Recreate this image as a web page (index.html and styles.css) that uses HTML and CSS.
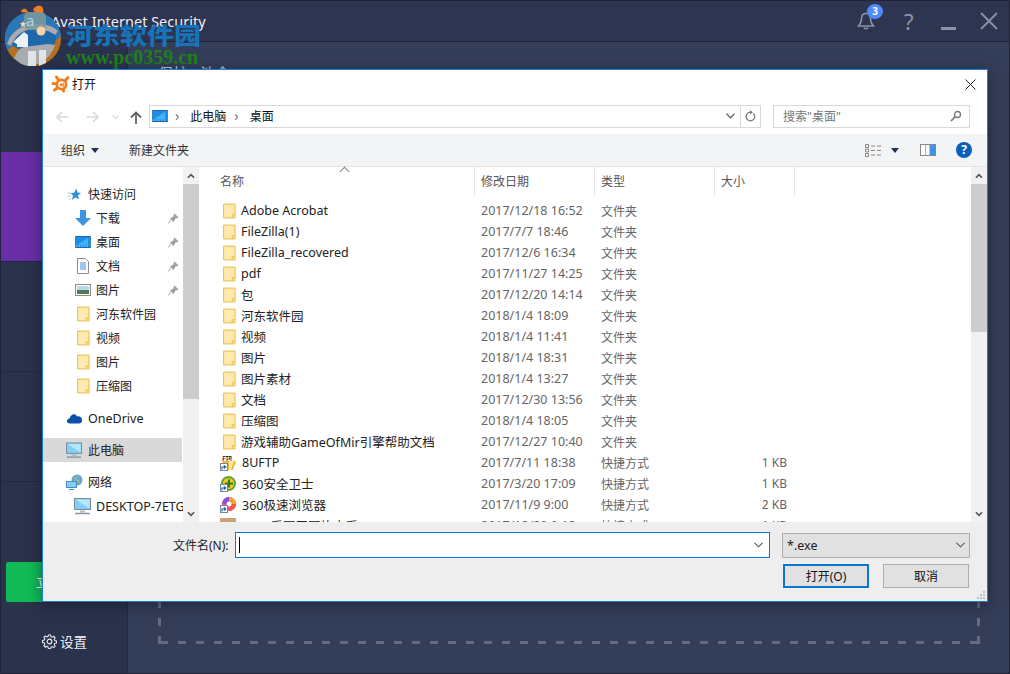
FILE: index.html
```html
<!DOCTYPE html>
<html lang="zh">
<head>
<meta charset="utf-8">
<title>Avast Internet Security</title>
<link rel="stylesheet" href="styles.css">
</head>
<body>
<svg class="defs" width="0" height="0" aria-hidden="true">
  <symbol id="folder" viewBox="0 0 14 16">
    <path d="M.5.5h12.500v15H.5z" fill="#fde08c" stroke="#e8bf4e"/>
    <path d="M1.500 1.500h10.500v11h-2.500v2h-8z" fill="#fee9ae"/>
    <path d="M10 15v-3h3" fill="none" stroke="#e8bf4e"/>
  </symbol>
  <symbol id="splash" viewBox="0 0 20 18">
    <g stroke="#f57c1f" stroke-width="3" stroke-linecap="round">
      <path d="M10.500 9.500 5.500 2M10.500 9.500 17 2.500M10.500 9.500 2 8.500M10.500 9.500 3.500 15M10.500 9.500 12.500 16"/>
    </g>
    <circle cx="10.500" cy="9.500" r="6" fill="#f57c1f"/>
    <circle cx="10.500" cy="9.500" r="3.300" fill="#fff"/>
    <circle cx="10.300" cy="9.700" r="1.500" fill="#f57c1f"/>
    <path d="M12.300 7.500v4.300" stroke="#f57c1f" stroke-width="1.100"/>
  </symbol>
  <symbol id="monitor" viewBox="0 0 18 17">
    <rect x=".5" y=".5" width="16" height="11" fill="#7fd0f7" stroke="#7a8a99"/>
    <path d="M1.500 1.500h14v9z" fill="#b6e6fb"/>
    <path d="M6 12.500h5v2H6z" fill="#b6bcc4"/>
    <path d="M1 15.500h15" stroke="#8a97a6" stroke-width="1.500"/>
  </symbol>
  <symbol id="desk" viewBox="0 0 17 13">
    <rect x=".5" y=".5" width="16" height="12" fill="#1e8fe6" stroke="#0c62b4"/>
    <path d="M2 10 14 2v8z" fill="#44b1f3"/>
    <path d="M1 11h15" stroke="#dff" stroke-dasharray="1 2"/>
  </symbol>
  <symbol id="pin" viewBox="0 0 11 11">
    <path d="M6.500.5 10.500 4.500 9 5.500 8 5 6 8 6 9.500 1.500 5 3 5 6 3 5.500 2z" fill="#9aa0a6"/>
    <path d="M3 7 .5 10.500" stroke="#9aa0a6"/>
  </symbol>
  <symbol id="shortcut" viewBox="0 0 8 8">
    <rect x=".5" y=".5" width="7" height="7" fill="#fff" stroke="#7b8794"/>
    <path d="M2 6.500V4h3M3.800 2.300 5.800 4 3.800 5.700" fill="none" stroke="#1d5fb0" stroke-width="1.100"/>
  </symbol>
</svg>

<div class="app">
  <header class="titlebar">
    <span class="app-name">Avast Internet Security</span>
    <div class="title-actions">
      <span class="bell">
        <svg viewBox="0 0 18 20" width="18" height="20"><path d="M9 2.500c-3 0-4.500 2.300-4.500 5 0 4-1 5.500-3 7.500h15c-2-2-3-3.500-3-7.500 0-2.700-1.500-5-4.500-5zM7 16.500c.4 1.500 3.600 1.500 4 0" fill="none" stroke="#8b93a6" stroke-width="1.500"/></svg>
        <span class="badge">3</span>
      </span>
      <span class="help">?</span>
      <span class="min"></span>
      <svg class="close-x" viewBox="0 0 18 18" width="18" height="18"><path d="M1 1l16 16M17 1 1 17" stroke="#8b93a6" stroke-width="1.800"/></svg>
    </div>
  </header>
  <div class="app-body">
    <aside class="sidebar">
      <div class="side-top"></div>
      <div class="side-item side-active"></div>
      <div class="side-item"></div>
      <div class="side-item"></div>
      <div class="side-upgrade"><span class="upgrade-btn">立</span></div>
      <div class="side-settings">
        <svg viewBox="0 0 16 16" width="15" height="15"><path d="M6.800 1h2.400l.4 2 1.400.6 1.700-1.100 1.700 1.700-1.100 1.700.6 1.400 2 .4v2.400l-2 .4-.6 1.400 1.100 1.700-1.700 1.700-1.700-1.100-1.400.6-.4 2H6.800l-.4-2L5 13.800l-1.700 1.100-1.700-1.700 1.100-1.700L2.100 10l-2-.4V7.200l2-.4.600-1.400L1.600 3.700l1.700-1.700L5 3.100l1.400-.6z" transform="translate(.5 .1) scale(.94)" fill="none" stroke="#e8ebf2" stroke-width="1.200"/><circle cx="8" cy="8" r="2.500" fill="none" stroke="#e8ebf2" stroke-width="1.200"/></svg>
        <span>设置</span>
      </div>
    </aside>
    <main class="main">
      <div class="tabs"><span>保护</span><span>池金</span></div>
      <div class="dropzone"></div>
    </main>
  </div>
</div>

<div class="watermark">
  <svg class="wm-logo" viewBox="0 0 64 68" width="64" height="68">
    <path d="M21 12c0-3 3-4 5-3l3 4zM33 10c1-4 6-5 8-4 2 1 3 4 2 7l-5 2z" fill="#f57c1f"/>
    <ellipse cx="33" cy="39" rx="28" ry="27" fill="#b7701f"/>
    <path d="M5 41C4 24 17 12 33 12c15 0 27 10 28 24l-7 6C40 36 20 38 8 50c-2-3-3-6-3-9z" fill="#2b78b6"/>
    <ellipse cx="33" cy="39" rx="23" ry="13" fill="#1d69aa"/>
    <path d="M7 44C11 30 24 23 40 24c8 .5 14 3 18 7l-3 4c-5-4-12-6-20-6-11 0-20 6-24 17z" fill="#a9abae"/>
    <path d="M14 58c3-5 4-9 10-11l24-3 7 1c-3 9-9 16-17 19l-10 2c-6-1-10-4-14-8z" fill="#a9abae"/>
    <path d="M13 42 24 32l4 3v12H17v-3z" fill="#eef1f4"/>
    <path d="M28 51h8v15h-8zM39 50h7v13l-7 3z" fill="#e3e4e6"/>
    <rect x="24" y="12" width="22" height="18" rx="5" fill="#7d9a9b" opacity=".85"/>
    <circle cx="41" cy="31" r="4.500" fill="#fbd3a6"/>
    <path d="M23 21l1 2 2 .3-1.500 1.500.4 2.200-1.900-1-1.900 1 .4-2.200L20 23.300l2-.3z" fill="#fbd3a6"/>
    <text x="26" y="26" class="wm-a">a</text>
  </svg>
  <div class="wm-text">
    <div class="wm-cn">河东软件园</div>
    <div class="wm-url">www.pc0359.cn</div>
  </div>
</div>

<section class="dialog">
  <div class="d-title">
    <svg viewBox="0 0 20 18" width="20" height="18"><use href="#splash"/></svg>
    <span>打开</span>
    <svg class="d-close" viewBox="0 0 11 11" width="11" height="11"><path d="M.5.5l10 10M10.500.5l-10 10" stroke="#222" stroke-width="1"/></svg>
  </div>
  <div class="d-addr">
    <div class="nav-arrows">
      <svg viewBox="0 0 13 12" width="13" height="12"><path d="M12.500 6H1.500M6 1 1 6l5 5" fill="none" stroke="#d9d9d9" stroke-width="1.600"/></svg>
      <svg viewBox="0 0 13 12" width="13" height="12"><path d="M.5 6h11M7 1l5 5-5 5" fill="none" stroke="#d9d9d9" stroke-width="1.600"/></svg>
      <svg viewBox="0 0 7 5" width="7" height="5"><path d="M.5.5 3.500 3.500 6.500.5" fill="none" stroke="#d9d9d9" stroke-width="1.200"/></svg>
      <svg viewBox="0 0 12 13" width="12" height="13"><path d="M6 13V2M1 6.500 6 1.500l5 5" fill="none" stroke="#666" stroke-width="1.800"/></svg>
    </div>
    <div class="addr-box">
      <svg class="addr-icon" viewBox="0 0 17 13" width="16" height="12"><use href="#desk"/></svg>
      <span class="crumb-sep">›</span><span>此电脑</span>
      <span class="crumb-sep">›</span><span>桌面</span>
      <svg class="addr-drop" viewBox="0 0 9 6" width="9" height="6"><path d="M.5.800 4.500 4.800 8.500.8" fill="none" stroke="#666" stroke-width="1.300"/></svg>
      <span class="addr-refresh"><svg viewBox="0 0 11 12" width="11" height="12"><path d="M8.500 3.500A4.300 4.300 0 1 1 5.500 2.200" fill="none" stroke="#777" stroke-width="1.200"/><path d="M5 .2v4l3-2z" fill="#777"/></svg></span>
    </div>
    <div class="search-box">
      <span>搜索"桌面"</span>
      <svg viewBox="0 0 12 12" width="12" height="12"><circle cx="7.500" cy="4.500" r="3" fill="none" stroke="#777" stroke-width="1.300"/><path d="M5.300 6.700 1 11" stroke="#777" stroke-width="1.700"/></svg>
    </div>
  </div>
  <div class="d-tools">
    <span class="tool">组织<i class="caret"></i></span>
    <span class="tool tool-new">新建文件夹</span>
    <div class="tools-right">
      <svg viewBox="0 0 17 13" width="17" height="13"><path d="M.5.500h3v3h-3zM.5 5h3v3h-3zM.5 9.500h3v3h-3z" fill="none" stroke="#888"/><path d="M6 2h4M12 2h4M6 6.500h4M12 6.500h4M6 11h4M12 11h4" stroke="#888"/></svg>
      <i class="caret caret-view"></i>
      <svg class="pane-icon" viewBox="0 0 16 12" width="16" height="12"><rect x=".5" y=".5" width="15" height="11" fill="#fff" stroke="#888"/><rect x="9.500" y="1" width="5.500" height="10" fill="#3f95df"/><path d="M5.500 1v10" stroke="#aaa"/></svg>
      <span class="help-round">?</span>
    </div>
  </div>
  <div class="d-content">
    <nav class="tree">
      <div class="tree-list">
        <div class="tree-row lv0 first">
          <svg viewBox="0 0 14 13" width="14" height="13"><path d="M9 .5 10 4.500l3.500.5-3 2.500 1 4-3.500-2.300L4.500 12l1-4.500L3 5l3.500-.3z" fill="#2f8fdc"/><path d="M0 5h3M0 8h3M1 11h2" stroke="#9ccbee"/></svg>
          <span>快速访问</span>
        </div>
        <div class="tree-row lv1">
          <svg viewBox="0 0 16 16" width="16" height="16"><path d="M5 0h6v8h5l-8 8-8-8h5z" fill="#3f94e0"/></svg>
          <span>下载</span><svg class="pin" width="11" height="11"><use href="#pin"/></svg>
        </div>
        <div class="tree-row lv1">
          <svg viewBox="0 0 17 13" width="16" height="12"><use href="#desk"/></svg>
          <span>桌面</span><svg class="pin" width="11" height="11"><use href="#pin"/></svg>
        </div>
        <div class="tree-row lv1">
          <svg viewBox="0 0 16 16" width="16" height="16"><path d="M2.500.5h8l3 3v12h-11z" fill="#fff" stroke="#8c8c8c"/><path d="M5 5h6M5 7h6M5 9h6M5 11h6" stroke="#3d8ed6"/></svg>
          <span>文档</span><svg class="pin" width="11" height="11"><use href="#pin"/></svg>
        </div>
        <div class="tree-row lv1">
          <svg viewBox="0 0 16 12" width="16" height="12"><rect x=".5" y=".5" width="15" height="11" fill="#fff" stroke="#8c8c8c"/><rect x="2" y="2" width="12" height="4" fill="#b9d8ee"/><rect x="2" y="6" width="12" height="4" fill="#4f7d55"/></svg>
          <span>图片</span><svg class="pin" width="11" height="11"><use href="#pin"/></svg>
        </div>
        <div class="tree-row lv1 ind"><svg width="13" height="16"><use href="#folder"/></svg><span>河东软件园</span></div>
        <div class="tree-row lv1 ind"><svg width="13" height="16"><use href="#folder"/></svg><span>视频</span></div>
        <div class="tree-row lv1 ind"><svg width="13" height="16"><use href="#folder"/></svg><span>图片</span></div>
        <div class="tree-row lv1 ind"><svg width="13" height="16"><use href="#folder"/></svg><span>压缩图</span></div>
        <div class="tree-row lv0 gap-a latin">
          <svg viewBox="0 0 16 11" width="16" height="11"><path d="M3.500 10.500c-4 0-4-4.500-.5-5C4 1 9-.5 10.500 3.500c3-.8 5.500 1.500 5 4.500-.2 1.500-1.500 2.500-3 2.500z" fill="#0f4fa8"/></svg>
          <span>OneDrive</span>
        </div>
        <div class="tree-row lv0 gap-b selected">
          <svg width="18" height="17"><use href="#monitor"/></svg>
          <span>此电脑</span>
        </div>
        <div class="tree-row lv0 gap-b">
          <svg viewBox="0 0 17 16" width="17" height="16"><circle cx="11" cy="6" r="5.500" fill="#6fa5d6"/><path d="M8 2c2 2 4 3 6 6-2 1-4 0-5-2z" fill="#8fc27c"/><rect x=".5" y="7.500" width="10" height="6" fill="#7fd0f7" stroke="#4c87bb"/><path d="M3 15.500h5" stroke="#4c87bb"/></svg>
          <span>网络</span>
        </div>
        <div class="tree-row lv1 latin">
          <svg width="18" height="17"><use href="#monitor"/></svg>
          <span>DESKTOP-7ETG</span>
        </div>
      </div>
      <div class="scroll scroll-nav">
        <span class="sc-btn"><svg viewBox="0 0 9 6" width="8" height="6"><path d="M1 5 4.500 1.500 8 5" fill="none" stroke="#555" stroke-width="1.800"/></svg></span>
        <span class="sc-thumb"></span>
        <span class="sc-btn sc-end"><svg viewBox="0 0 9 6" width="8" height="6"><path d="M1 1 4.500 4.500 8 1" fill="none" stroke="#555" stroke-width="1.800"/></svg></span>
      </div>
    </nav>
    <div class="files">
      <div class="file-head">
        <span class="col-name">名称<i class="sort"></i></span>
        <span>修改日期</span>
        <span>类型</span>
        <span>大小</span>
      </div>
      <div class="file-body">
        <div class="file-row"><span class="fn"><svg width="13" height="16"><use href="#folder"/></svg>Adobe Acrobat</span><span class="dt">2017/12/18 16:52</span><span>文件夹</span><span></span></div>
        <div class="file-row"><span class="fn"><svg width="13" height="16"><use href="#folder"/></svg>FileZilla(1)</span><span class="dt">2017/7/7 18:46</span><span>文件夹</span><span></span></div>
        <div class="file-row"><span class="fn"><svg width="13" height="16"><use href="#folder"/></svg>FileZilla_recovered</span><span class="dt">2017/12/6 16:34</span><span>文件夹</span><span></span></div>
        <div class="file-row"><span class="fn"><svg width="13" height="16"><use href="#folder"/></svg>pdf</span><span class="dt">2017/11/27 14:25</span><span>文件夹</span><span></span></div>
        <div class="file-row"><span class="fn"><svg width="13" height="16"><use href="#folder"/></svg>包</span><span class="dt">2017/12/20 14:14</span><span>文件夹</span><span></span></div>
        <div class="file-row"><span class="fn"><svg width="13" height="16"><use href="#folder"/></svg>河东软件园</span><span class="dt">2018/1/4 18:09</span><span>文件夹</span><span></span></div>
        <div class="file-row"><span class="fn"><svg width="13" height="16"><use href="#folder"/></svg>视频</span><span class="dt">2018/1/4 11:41</span><span>文件夹</span><span></span></div>
        <div class="file-row"><span class="fn"><svg width="13" height="16"><use href="#folder"/></svg>图片</span><span class="dt">2018/1/4 18:31</span><span>文件夹</span><span></span></div>
        <div class="file-row"><span class="fn"><svg width="13" height="16"><use href="#folder"/></svg>图片素材</span><span class="dt">2018/1/4 13:27</span><span>文件夹</span><span></span></div>
        <div class="file-row"><span class="fn"><svg width="13" height="16"><use href="#folder"/></svg>文档</span><span class="dt">2017/12/30 13:56</span><span>文件夹</span><span></span></div>
        <div class="file-row"><span class="fn"><svg width="13" height="16"><use href="#folder"/></svg>压缩图</span><span class="dt">2018/1/4 18:05</span><span>文件夹</span><span></span></div>
        <div class="file-row"><span class="fn"><svg width="13" height="16"><use href="#folder"/></svg>游戏辅助GameOfMir引擎帮助文档</span><span class="dt">2017/12/27 10:40</span><span>文件夹</span><span></span></div>
        <div class="file-row"><span class="fn"><svg class="app-ic" viewBox="0 0 16 16" width="16" height="16"><path d="M2 6h14l-3 9H5z" fill="#f2b632"/><path d="M9 6h5l-3 9H9z" fill="#fbe9a8"/><path d="M2 4.500h2v1H2zM6 4.500h2v1H6zM10 4.500h2v1h-2z" fill="#c33"/><text x="2.500" y="4.500" class="ftp">FTP</text><use href="#shortcut" width="8" height="8" y="8"/></svg>8UFTP</span><span class="dt">2017/7/11 18:38</span><span>快捷方式</span><span class="sz">1 KB</span></div>
        <div class="file-row"><span class="fn"><svg class="app-ic" viewBox="0 0 16 16" width="16" height="16"><circle cx="8.500" cy="7.500" r="7.500" fill="#5ca82b"/><circle cx="8.500" cy="7.500" r="5.500" fill="#f0c92b"/><path d="M9 3.500v8M5 7.500h8" stroke="#2b7a1f" stroke-width="2"/><use href="#shortcut" width="8" height="8" y="8"/></svg>360安全卫士</span><span class="dt">2017/3/20 17:09</span><span>快捷方式</span><span class="sz">1 KB</span></div>
        <div class="file-row"><span class="fn"><svg class="app-ic" viewBox="0 0 16 16" width="16" height="16"><circle cx="9" cy="7" r="7" fill="#e74d9b"/><path d="M9 0a7 7 0 0 1 7 7H9z" fill="#f4a32a"/><path d="M2 7a7 7 0 0 1 7-7v7z" fill="#8c4fd8"/><path d="M9 7h7a7 7 0 0 1-7 7z" fill="#f25c3c"/><circle cx="9" cy="7" r="2.500" fill="#fff"/><use href="#shortcut" width="8" height="8" y="8"/></svg>360极速浏览器</span><span class="dt">2017/11/9 9:00</span><span>快捷方式</span><span class="sz">2 KB</span></div>
        <div class="file-row"><span class="fn"><svg class="app-ic" viewBox="0 0 16 16" width="16" height="16"><rect width="16" height="16" fill="#c9a27a"/></svg>2345看图王图片查看</span><span class="dt">2017/12/20 9:12</span><span>快捷方式</span><span class="sz">1 KB</span></div>
      </div>
    </div>
    <div class="scroll scroll-main">
      <span class="sc-btn"><svg viewBox="0 0 9 6" width="8" height="6"><path d="M1 5 4.500 1.500 8 5" fill="none" stroke="#555" stroke-width="1.800"/></svg></span>
      <span class="sc-thumb"></span>
      <span class="sc-btn sc-end"><svg viewBox="0 0 9 6" width="8" height="6"><path d="M1 1 4.500 4.500 8 1" fill="none" stroke="#555" stroke-width="1.800"/></svg></span>
    </div>
  </div>
  <div class="d-bottom">
    <div class="name-row">
      <label>文件名(N):</label>
      <div class="name-input"><i class="cursor"></i><svg viewBox="0 0 9 6" width="9" height="6"><path d="M.5.800 4.500 4.800 8.500.8" fill="none" stroke="#555" stroke-width="1.100"/></svg></div>
      <div class="type-select"><span>*.exe</span><svg viewBox="0 0 9 6" width="9" height="6"><path d="M.5.800 4.500 4.800 8.500.8" fill="none" stroke="#555" stroke-width="1.100"/></svg></div>
    </div>
    <div class="btn-row">
      <button class="btn btn-primary">打开(O)</button>
      <button class="btn">取消</button>
    </div>
    <svg class="grip" viewBox="0 0 9 9" width="9" height="9"><path d="M7 1h2v2H7zM4 4h2v2H4zM7 4h2v2H7zM1 7h2v2H1zM4 7h2v2H4zM7 7h2v2H7z" fill="#c0c0c0"/></svg>
  </div>
</section>
</body>
</html>
```

FILE: styles.css
```css
* { box-sizing: border-box; }
html, body { margin: 0; height: 100%; overflow: hidden; }
body {
  position: relative;
  width: 1010px;
  height: 674px;
  background: #353e59;
  font-family: "Noto Sans", "Noto Sans CJK SC", sans-serif;
  font-size: 12px;
  color: #222;
}
.defs { position: absolute; }

/* Avast window behind */
.app { width: 1010px; height: 674px; display: flex; flex-direction: column; border: 1px solid #1f2438; }
.titlebar {
  height: 41px; flex: none; display: flex; align-items: center; background: #2d3550;
  border-bottom: 1px solid #1f2438; padding-left: 50px; color: #eef0f5;
}
.app-name { font-size: 14.500px; font-family: "Noto Sans", sans-serif; }
.title-actions { margin-left: auto; display: flex; align-items: center; padding-right: 11px; }
.bell { position: relative; display: block; height: 20px; width: 18px; margin-right: 29px; }
.badge {
  position: absolute; left: 10px; top: -7px; width: 16px; height: 15px; border-radius: 50%;
  background: #4d8bff; color: #fff; font-size: 10px; font-weight: 700; line-height: 15px; text-align: center;
}
.help { color: #8b93a6; font-size: 22px; line-height: 24px; margin-right: 26px; width: 11px; }
.min { width: 15px; height: 3px; background: #8b93a6; margin-right: 24px; margin-top: 15px; }

.app-body { flex: 1; display: flex; min-height: 0; }
.sidebar { width: 127px; flex: none; background: #2b324b; border-right: 1px solid #222940; display: flex; flex-direction: column; }
.side-top { height: 110px; flex: none; }
.side-item { height: 110px; flex: none; border-bottom: 1px solid #222940; }
.side-active { background: #6a2ea8; }
.side-upgrade { flex: none; padding: 80px 5px 0 5px; height: 120px; }
.upgrade-btn {
  display: block; height: 40px; border-radius: 2px; background: #10bb55; color: #fff;
  font-size: 14px; line-height: 40px; padding-left: 30px;
}
.side-settings { display: flex; align-items: center; gap: 3px; padding: 0 0 0 41px; margin-top: 29px; color: #eef0f5; font-size: 13.500px; }
.side-settings svg { flex: none; }

.main { flex: 1; display: flex; flex-direction: column; padding: 20px 29px 29px 30px; background: #353e59; }
.tabs { display: flex; gap: 12px; color: #c7cbd6; font-size: 15px; height: 300px; flex: none; }
.dropzone {
  flex: 1;
  background:
    repeating-linear-gradient(90deg, #646c84 0 8px, transparent 8px 18px) 2px bottom / 100% 3px no-repeat,
    repeating-linear-gradient(0deg, #646c84 0 8px, transparent 8px 18px) left bottom / 3px 100% no-repeat,
    repeating-linear-gradient(0deg, #646c84 0 8px, transparent 8px 18px) right bottom / 3px 100% no-repeat;
}

/* Watermark */
.watermark { position: absolute; left: 0; top: 0; display: flex; pointer-events: none; }
.wm-logo { flex: none; }
.wm-a { font-family: "Noto Sans", sans-serif; font-size: 15px; fill: #a8d6f5; }
.wm-text { margin-left: 2px; padding-top: 17px; font-weight: 700; }
.wm-cn { color: #1772b8; font-size: 27px; line-height: 30px; font-weight: 900; font-family: "Noto Sans CJK SC", serif; transform: scaleY(.85); transform-origin: center bottom; }
.wm-url { color: #20801f; font-family: "Liberation Serif", serif; font-size: 20px; line-height: 20px; }

/* Dialog */
.dialog {
  position: absolute; left: 42px; top: 69px; width: 946px; height: 533px;
  background: #fff; border: 1px solid #1b82d2; display: flex; flex-direction: column;
  box-shadow: 0 3px 14px rgba(10,14,30,.5);
}
.d-title { height: 28px; flex: none; display: flex; align-items: center; padding: 0 10px 0 8px; gap: 1px; color: #111; }
.d-close { margin-left: auto; margin-right: 1px; }
.d-addr { height: 36px; flex: none; display: flex; align-items: center; padding: 0 17px 0 13px; }
.nav-arrows { display: flex; align-items: center; width: 93px; flex: none; margin-top: 2px; }
.nav-arrows svg:nth-child(1) { margin-right: 17px; }
.nav-arrows svg:nth-child(2) { margin-right: 13px; }
.nav-arrows svg:nth-child(3) { margin-right: 11px; }
.addr-box {
  width: 612px; height: 23px; border: 1px solid #d9d9d9; display: flex; align-items: center;
  padding-left: 2px; color: #111; flex: none;
}
.addr-icon { margin-right: -1px; }
.crumb-sep { color: #777; font-size: 14px; line-height: 14px; margin: 0 11px 0 8px; }
.addr-drop { margin-left: auto; margin-right: 5px; }
.addr-refresh { width: 20px; height: 21px; border-left: 1px solid #d9d9d9; display: flex; align-items: center; justify-content: center; }
.search-box {
  margin-left: 12px; width: 202px; height: 23px; border: 1px solid #d9d9d9; display: flex;
  align-items: center; justify-content: space-between; padding: 0 7px 0 9px; color: #777;
}
.d-tools { height: 33px; flex: none; background: #f3f4f6; border-bottom: 1px solid #e3e3e3; display: flex; align-items: center; padding: 0 15px 0 18px; color: #333; }
.tool { display: flex; align-items: center; gap: 6px; }
.tool-new { margin-left: 30px; }
.caret { display: block; width: 0; height: 0; border: 4px solid transparent; border-top: 5px solid #1f3358; border-bottom: 0; }
.tools-right { margin-left: auto; display: flex; align-items: center; }
.caret-view { margin-left: 9px; }
.pane-icon { margin-left: 21px; }
.help-round { margin-left: 20px; width: 16px; height: 16px; border-radius: 50%; background: #0a5fb8; color: #fff; font-weight: 700; line-height: 16px; text-align: center; }

.d-content { height: 355px; flex: none; display: flex; min-height: 0; }
.tree { width: 156px; flex: none; display: flex; border-right: 1px solid #f0f0f0; }
.tree-list { width: 140px; flex: none; overflow: hidden; padding-top: 15px; }
.tree-row { height: 24px; display: flex; align-items: center; white-space: nowrap; color: #222; position: relative; }
.tree-row.lv0 { padding-left: 23px; gap: 5px; }
.tree-row.lv1 { padding-left: 31px; gap: 4px; }
.tree-row.latin { font-size: 12.500px; }
.tree-row.lv0 > svg:first-child { width: 17px; flex: none; }
.tree-row.lv1 > svg:first-child { width: 18px; flex: none; }
.tree-row.ind { padding-left: 34px; gap: 6px; }
.tree-row.ind > svg:first-child { width: 13px; }
.tree-row.gap-a, .tree-row.gap-b { margin-top: 8px; }
.tree-row.selected { background: #d9d9d9; margin-right: 1px; }
.pin { position: absolute; left: 125px; top: 7px; }
.scroll { width: 16px; flex: none; display: flex; flex-direction: column; background: #f1f1f1; }
.sc-btn { height: 17px; display: flex; align-items: center; justify-content: center; flex: none; }
.sc-end { margin-top: auto; }
.sc-thumb { display: block; background: #cdcdcd; flex: none; }
.scroll-nav .sc-thumb { height: 215px; }
.scroll-main .sc-thumb { height: 148px; }

.files { flex: 1; min-width: 0; padding-left: 2px; display: flex; flex-direction: column; }
.file-head { height: 28px; flex: none; display: grid; grid-template-columns: 274px 120px 120px 80px; color: #555; }
.file-head span { border-right: 1px solid #e3e5e8; padding-left: 6px; line-height: 29px; }
.file-head .col-name { position: relative; padding-left: 19px; }
.sort { position: absolute; left: 140px; top: 1px; width: 8px; height: 5px; }
.sort::before { content: ""; position: absolute; left: 0; top: 0; width: 6px; height: 6px; border-left: 1px solid #888; border-top: 1px solid #888; transform: rotate(45deg); }
.file-body { flex: 1; min-height: 0; overflow: hidden; padding-top: 5px; }
.file-row { height: 21px; display: grid; grid-template-columns: 280px 120px 120px 66px; align-items: center; color: #666; white-space: nowrap; }
.fn { display: flex; align-items: center; gap: 5px; color: #222; padding-left: 22px; font-size: 12.500px; }
.fn .app-ic { margin-left: -3px; margin-right: 1px; flex: none; }
.ftp { font-family: "Liberation Sans", sans-serif; font-size: 5px; font-weight: 700; fill: #111; }
.dt { font-size: 12.500px; }
.sz { text-align: right; }

.d-bottom { flex: 1; min-height: 0; background: #eeeeee; position: relative; padding: 10px 17px 0 130px; }
.name-row { display: flex; align-items: center; height: 26px; }
.name-row label { width: 62px; color: #222; flex: none; }
.name-input { width: 535px; height: 26px; background: #fff; border: 1px solid #0a78d2; display: flex; align-items: center; justify-content: space-between; padding: 0 6px 0 3px; flex: none; }
.cursor { display: block; width: 1px; height: 16px; background: #000; }
.type-select { margin-left: 12px; width: 188px; height: 25px; background: #e1e1e1; border: 1px solid #adadad; display: flex; align-items: center; justify-content: space-between; padding: 0 4px; flex: none; color: #222; font-size: 12.500px; }
.btn-row { display: flex; justify-content: flex-end; gap: 14px; margin-top: 6px; padding-right: 1px; }
.btn { width: 86px; height: 24px; background: #e1e1e1; border: 1px solid #adadad; font: inherit; color: #111; padding: 0; }
.btn-primary { border: 2px solid #0a78d2; }
.grip { position: absolute; right: 2px; bottom: 2px; }
```
